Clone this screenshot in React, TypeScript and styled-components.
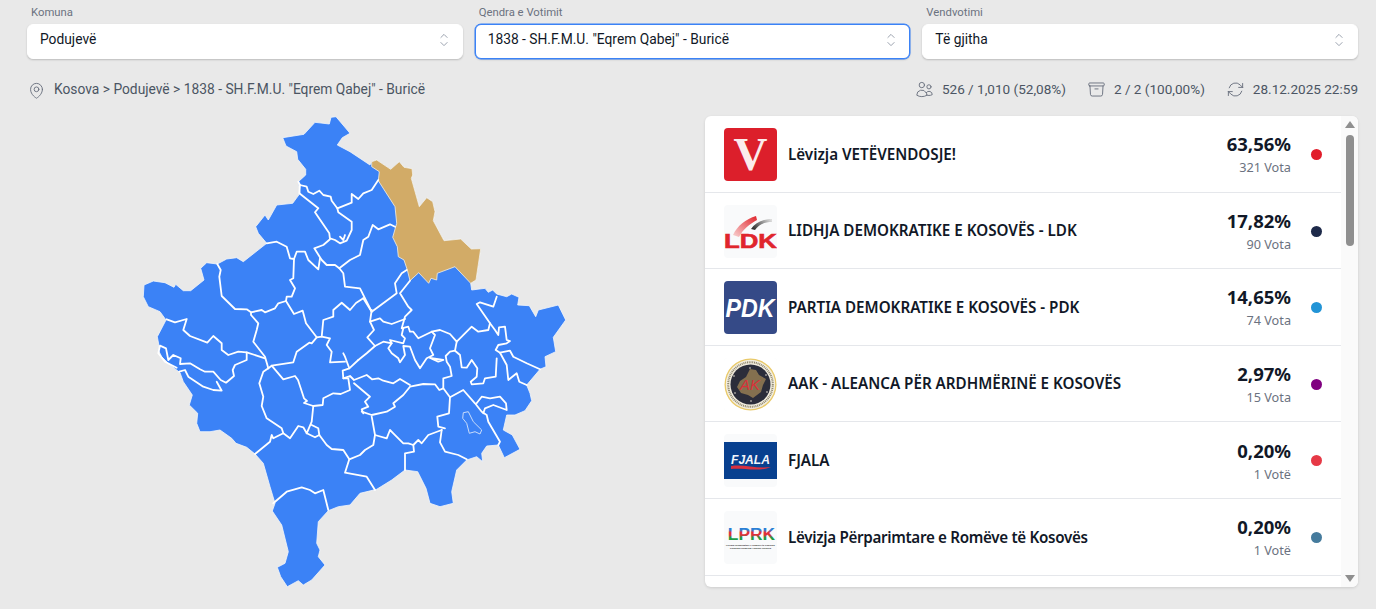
import React from "react";
import styled, { createGlobalStyle } from "styled-components";
import { HiOutlineChevronUpDown, HiOutlineMapPin, HiOutlineUsers, HiOutlineArchiveBox, HiOutlineArrowPath } from "react-icons/hi2";

const Global = createGlobalStyle`
  html, body { margin: 0; padding: 0; height: 100%; overflow: hidden; background: #e9e9e9; }
  * { box-sizing: border-box; }
`;
const Page = styled.div`
  width: 1376px; height: 609px; padding: 6px 18px 0 27px; overflow: hidden;
  font-family: Roboto, "Liberation Sans", sans-serif; background: #e9e9e9;
`;
const Filters = styled.div`display: grid; grid-template-columns: repeat(3, 1fr); gap: 12px;`;
const Field = styled.div`display: flex; flex-direction: column;`;
const Label = styled.label`font-size: 11.3px; line-height: 14px; color: #6b7280; padding-left: 4px; margin-bottom: 4px;`;
const Select = styled.div<{ $focus?: boolean }>`
  height: 35px; display: flex; align-items: center; justify-content: space-between;
  padding: 0 8px 3px 12px; background: #fff; border-radius: 6px; font-size: 13.8px; color: #111827;
  border: 1px solid ${(p) => (p.$focus ? "#3b82f6" : "#fff")};
  box-shadow: ${(p) => (p.$focus ? "0 0 0 .5px #3b82f6, 0 1px 2px rgba(0,0,0,.15)" : "0 1px 2px rgba(0,0,0,.2)")};
  svg { color: #9ca3af; flex: none; stroke-width: 1.2; }
`;
const SelectText = styled.span`margin-bottom: 2px;`;
const Info = styled.div`
  display: flex; justify-content: space-between; align-items: center; height: 20px; margin-top: 20px;
  font-size: 13.8px; color: #4b5563;
`;
const Crumb = styled.div`display: flex; align-items: center; gap: 8px; svg { color: #6b7280; stroke-width: 1.2; margin-top: 3px; }`;
const Stats = styled.div`display: flex; gap: 21px; font-size: 13.55px;`;
const Stat = styled.div`display: flex; align-items: center; gap: 8px; svg { color: #6b7280; stroke-width: 1.2; margin-top: 1px; }`;
const Main = styled.div`display: flex; margin-top: 17px;`;
const MapBox = styled.svg`display: block; width: 678px; height: 471px; flex: none;`;
const Panel = styled.div`
  width: 653px; height: 471px; display: flex; background: #fff; border-radius: 6px; overflow: hidden;
  box-shadow: 0 1px 3px rgba(0,0,0,.12);
`;
const List = styled.div`flex: 1; overflow: hidden;`;
const Row = styled.div`
  height: 76.6px; display: flex; align-items: center; padding: 1.5px 19px 0; gap: 11px;
  border-bottom: 1px solid #e5e7eb;
`;
const Logo = styled.div`
  width: 53px; height: 53px; flex: none; border-radius: 4px; overflow: hidden; background: #f9fafb;
  svg { display: block; width: 53px; height: 53px; }
`;
const Name = styled.div<{ $tight?: boolean }>`
  flex: 1; font-family: "Noto Sans", "Open Sans", sans-serif; font-weight: 600; font-size: 15.2px; color: #111827;
  letter-spacing: ${(p) => (p.$tight ? "-0.32px" : "0")}; margin-bottom: 2px;
`;
const Result = styled.div`text-align: right; font-family: "Noto Sans", "Open Sans", sans-serif; padding-top: 1.5px;`;
const Pct = styled.div`font-size: 18.5px; line-height: 24px; font-weight: 700; color: #111827;`;
const Votes = styled.div`font-size: 12.7px; line-height: 22px; color: #6b7280;`;
const Dot = styled.span<{ $c: string }>`
  width: 11px; height: 11px; border-radius: 50%; background: ${(p) => p.$c}; margin-left: 9px; flex: none;
`;
const Track = styled.div`
  width: 17px; flex: none; background: #fafafa; display: flex; flex-direction: column; align-items: center; position: relative;
`;
const ArrowUp = styled.span`
  margin-top: 5px; width: 0; height: 0; border-left: 5px solid transparent; border-right: 5px solid transparent;
  border-bottom: 7px solid #8f8f8f;
`;
const Thumb = styled.div`width: 8px; height: 111px; margin-top: 7px; border-radius: 4px; background: #8f8f8f;`;
const ArrowDown = styled.span`
  margin-top: auto; margin-bottom: 5px; width: 0; height: 0; border-left: 5px solid transparent;
  border-right: 5px solid transparent; border-top: 7px solid #8f8f8f;
`;

const outer = "282.7,137.7 304,134.3 315,122.3 329.3,124 331,117.3 336,116.7 350,133.3 342.3,137.7 337.3,145 350,151.7 370,165 371.7,161.7 376.7,160 390.7,169.3 399.3,161.7 404,167.3 412,168.7 412.7,175 411.3,178.3 419.3,206.7 426.7,197.7 432.7,201.7 435,211.7 433.3,220.7 444,240.7 460.7,239 471.3,249 480.7,248.7 476,280 470.7,283.3 471.7,290 485,288.3 488.3,292.3 492.7,290 496.7,294 506.7,296.7 511.7,294 519,297.3 517.7,305 529.3,305.7 535.7,316.7 538.3,310 558.3,305 565.7,320 553.3,337.3 555.7,351.7 545,356.7 546,366.7 540,369.3 526.7,385 530,393.3 531.7,400.7 525,410.7 515,415 506.7,415 503.3,430 512.3,435 520,449.3 504.3,457.7 498.3,445 486.7,446 481.7,453.3 482.7,461.7 476.7,456.7 466.7,460 456.7,470 451.7,491.7 453.3,503.3 440,506.7 430,503.3 426,488.3 417.7,471.7 405,470 391.7,480 376.7,489.3 360,493.3 350,505 338.3,506.7 328.3,510.7 318.3,521.7 316.7,543.3 320,550 318.3,556.7 325,565 311.7,580 303.3,585 298.3,580.7 287.3,586.7 280.7,576.7 277.3,567.3 285,563.3 288.3,551.7 281.7,525 272.3,511 275,503.3 270,486.7 263.3,463.3 255,454 246.7,447.3 236,443.3 231.7,438.3 220,430 210,431.7 200,431.7 196.7,423.3 197.7,413.3 189.3,405 192.3,395 183.3,381.7 180,372.7 168.3,363.3 161.7,356.7 158.3,350 159.3,347.3 157.3,336.7 166,320 160,311.7 148.3,306.7 143.3,296.7 144,285 153.3,281 165,282.7 174,287.3 175.7,284.3 183.3,290.7 190.7,290.7 204,280 200.7,268.3 206.7,262.7 217.3,264 226.7,259 236.7,257.7 243.3,261.7 266.7,243.3 258.3,233.3 255.7,226.7 265,215 268.3,220 276.7,205 292.7,203.3 300,193.3 298.3,181.7 305.7,175 305.7,169.3 297.7,159.3 296.7,151.7 286,146";
const gold = "371.7,161.7 376.7,160 390.7,169.3 399.3,161.7 404,167.3 412,168.7 412.7,175 411.3,178.3 419.3,206.7 426.7,197.7 432.7,201.7 435,211.7 433.3,220.7 444,240.7 460.7,239 471.3,249 480.7,248.7 476,280 470.7,283.3 455,266.7 437.3,273.3 436.7,280 431,278.3 428.7,283.3 418.7,272.7 410,280.7 407.3,270 404,260 398.3,256.7 397.3,246.7 392.7,237.3 396.7,223.3 395,206.7 378.3,180.7 379.3,171.7 371.7,166.7";
const lines = [
  "298.3,181.7 300,185 306.7,186.7 308.3,191.7 313.3,194 319.3,190.7 323.3,195 330.7,196.7 331.7,200.7 337.3,208.3 351.7,202.7 351.7,194 358.3,199 363.3,193.3 371.7,190 378.3,180",
  "300,185 299.3,193.3 318.3,208.3 315,212.3 329.3,233.3 330,239.3 323.3,245 314.3,248.3 321.7,260 326.7,265 335,265 339.3,268.3 350,260 360,255 363.3,240 368.3,236.7 372.7,225 378.3,229.3 390,224.3 395,226.7",
  "337.3,208.3 338.3,212.3 351.7,221.7 351.7,230 346.7,240.7 340,243.3 335,240 330,238.3",
  "340,236.7 343.3,240 345,235",
  "266.7,243.3 276.7,241.7 286.7,246.7 290,258.3 294,259 293.3,278.3 290,280 295,288.3 291.7,296.7 286.7,296.7 286,301 278.3,303.3 275,308.3 265,312.3 261.7,310 251,312.3 246.7,309.3 235,309 221.7,296 219.3,276.7 220.7,270 217.3,264",
  "294,259 296.7,251.7 305,251.7 308.3,260 318.3,269.3 320,258.3",
  "286,301 294,314 302.7,310.7 306,323.3 316.7,337.3 321.7,336.7 323.3,320 333.3,316.7 333.3,310 341.7,302.7 350,310 356,303 363.3,298.3",
  "251,312.3 251,315 258.3,323.3 256.7,330 253.3,341.7 265,356.7 268.3,368.3",
  "166.7,319.3 175,322.3 186.7,319 183.3,330 190,336 207.3,342.7 213.3,336 221.7,343.3 221.7,350 228.3,355 238.3,351.7 246.7,352.3 265,358.3",
  "246.7,352.3 246.7,360 235,365 232.7,370 234,376 226,382.7 220.7,380 213.3,371.7 205,371.7 200,369.3 190,363.3 180,364 180.7,358.3 173.3,355 168.3,360 166,348.3 160,345.7 158.3,353.3 165,361.7 176.7,367.7",
  "179.3,371.7 185,370 188.3,376.7 203.3,386.7 213.3,390 221.7,390.7 216.7,381.7",
  "268.3,368.3 263.3,371.7 259.3,383.3 263.3,396.7 261.7,406 266.7,418.3 281.7,428.3 283.3,433.3 273.3,438.3 271.7,435 270,441.7 255,454",
  "271.7,365.7 283.3,379.3 295,376 298,380 304,398.3 307,401 304,403 313.3,406 322.7,405 323.3,398.3 333.3,393.3 340.7,394 350,390 348.3,378.3 343.3,378.3 342.7,370.7 349.3,368.3 345,356.7 343.3,353.3",
  "321.7,336.7 330,338.3 326.7,345 331.7,351.7 330,362.3 345,361.7",
  "316.7,337.3 311.7,343.3 309.3,342.7 296.7,351.7 293.3,362.3 271.7,365.7 268.3,368.3",
  "349.3,368.3 358.3,360",
  "343.3,378.3 350,376 354,380 366.7,375 372,379.3 378.3,378.3 383.3,380.7 393.3,383.3 400,379 410,385",
  "354,383.3 370,396.7 365,401.7 368.3,406.7 361.7,409.3 363.3,413.3",
  "406.7,270 401.7,273.3 395,283.3 396.7,293.3 371.7,311.7 360,288.3 345,286.7 343.3,273.3 339.3,268.3",
  "363.3,298.3 371.7,311.7",
  "283.3,433.3 290,438.3 298.3,426 303.3,427.3 306.7,433.3 311.7,421.7 313.3,406",
  "306.7,433.3 315,437.3 319.3,435 318.3,428.3 311.7,425",
  "319.3,435 326.7,445 331.7,449 343.3,450 349.3,459.3 360,455 365,450 373.3,445 375,435 371.7,416.7",
  "349.3,459.3 345,472.7 366.7,476.7 375,490",
  "273.3,503.3 286.7,491.7 301.7,487.3 310,490 315,493.3 323.3,490 328.3,510",
  "410,280.7 400,293.3 408.3,306.7 411.7,310 405,316.7 401.7,328.3 408.3,326.7 410,331.7 413.3,331.7 418.3,338.3 431.7,331.7 440,330 450,334 456.7,341.7 471.7,326.7 478.3,331.7 488.3,330 490,323.3 476.7,304 480,302.3 493.3,306.7 496.7,296.7",
  "371.7,310 370,321.7 380,318.3 383.3,321.7 391.7,324 405,319",
  "370,321.7 374,330 367.3,337.3 375,346 366.7,353.3 358.3,360",
  "375,346 383.3,341.7 391.7,343.3 390,340 403.3,343.3 405,338.3 401.7,335 403.3,328.3",
  "490,323.3 495,330 498.3,335 499,327.3 505,326.7 506.7,340 510,341 506.7,343.3 498.3,345 495.7,350 500,352.7 510,350.7 513.3,356.7 526.7,363.3 540,369.3",
  "500,352.7 506.7,365 508.3,380 516.7,373.3 519.3,381.7 526.7,385",
  "496.7,358.3 495.7,376.7 485,378.3 483.3,383.3 471.7,384.3 470.7,381.7 476.7,376.7 477.3,368.3 471.7,360 466.7,367.7 461.7,367.3 460,355 455,350.7 456.7,341.7",
  "455,350.7 450,351.7 445.7,356 446.7,361.7 450,366.7 451.7,376 443.3,378.3 443.3,388.3 450,397.3 463.3,390 475,403.3 481.7,411.7 486.7,415 488.3,421.7 500,441.7 498.3,445",
  "450,397.3 449,413.3 437.3,416.7 438.3,426.7 445,428.3",
  "441.7,430 440,442.3 445,451.7 458.3,455 466.7,459.3",
  "441.7,430 428.3,435 421.7,443.3 418.3,440 413.3,445 408.3,443.3 403.3,443.3 393.3,433.3 390,430 386.7,438.3 375,435",
  "413.3,445 414,451.7 405,453.3 405,470",
  "361.7,411.7 371.7,415 386.7,411.7 395,406.7 393.3,403.3 403.3,395 410,386.7 423.3,384 435,384.3 439.3,390 443.3,388.3",
  "431.7,331.7 435,335 430,348.3 433.3,355 426.7,358.3 420,368.3 415,360 410,346.7 403.3,346 405,355 400,362.3 398.3,358.3 391.7,353.3 388.3,348.3 391.7,343.3",
  "430,358 443.3,360 438.3,361.7 430,358",
  "476,404 481.7,396.7 490,398.3 500,396.7 506,403.3 506.7,410 493.3,405 485,408.3 483.3,413.3",
];
const lake = "463.3,412.7 468.3,411.7 473.3,421.7 481.7,430 480,434 475,431.7 469.3,433.3 466.7,423.3 462.7,418.3";

const KosovoMap = () => (
  <MapBox viewBox="27 116 678 471">
    <polygon points={outer} fill="#3b82f6" stroke="#f4f6fa" strokeWidth="0.8" strokeLinejoin="round" />
    <polygon points={gold} fill="#d2ab67" stroke="#f4f0e6" strokeWidth="0.8" strokeLinejoin="round" />
    {lines.map((l, i) => (
      <polyline key={i} points={l} fill="none" stroke="#fff" strokeWidth="1.8" strokeLinejoin="round" strokeLinecap="round" />
    ))}
    <polygon points={lake} fill="#3b82f6" stroke="#c9dcfa" strokeWidth="1" />
  </MapBox>
);

const VLogo = () => (
  <svg viewBox="0 0 53 53">
    <rect width="53" height="53" fill="#dc1f2b" />
    <text x="26.5" y="42" textAnchor="middle" fontFamily="Liberation Serif, serif" fontWeight="700" fontSize="47" fill="#fbecec">V</text>
  </svg>
);
const LdkLogo = () => (
  <svg viewBox="0 0 53 53">
    <defs>
      <linearGradient id="ldkr" x1="0" x2="1" y1="1" y2="0"><stop offset="0" stopColor="#f9d3d3" /><stop offset="1" stopColor="#e0252c" /></linearGradient>
      <linearGradient id="ldkg" x1="0" x2="1" y1="0.6" y2="0.2"><stop offset="0" stopColor="#333" /><stop offset="1" stopColor="#ddd" /></linearGradient>
    </defs>
    <path d="M9 30 C13 21 22 14 32 11 L33 15 C26 19 19 24 15 32 Z" fill="url(#ldkr)" />
    <path d="M27 24 C31 18 38 14 48 14 L48 17 C41 17 35 19 31 25 Z" fill="url(#ldkg)" />
    <text x="26.5" y="43" textAnchor="middle" fontFamily="Liberation Sans, sans-serif" fontWeight="700" fontSize="21" fill="#e0252c" stroke="#e0252c" strokeWidth="0.6" textLength="53" lengthAdjust="spacingAndGlyphs">LDK</text>
  </svg>
);
const PdkLogo = () => (
  <svg viewBox="0 0 53 53">
    <rect width="53" height="53" fill="#354a87" />
    <text x="26" y="36" textAnchor="middle" fontFamily="Liberation Sans, sans-serif" fontWeight="700" fontStyle="italic" fontSize="25" fill="#fff" textLength="49" lengthAdjust="spacingAndGlyphs">PDK</text>
  </svg>
);
const AakLogo = () => (
  <svg viewBox="0 0 53 53">
    <rect width="53" height="53" fill="#fff" />
    <circle cx="26.5" cy="26.5" r="26" fill="#e9c968" />
    <circle cx="26.5" cy="26.5" r="24.7" fill="#f3eedf" />
    <circle cx="26.5" cy="26.5" r="22.3" fill="none" stroke="#8f8870" strokeWidth="2" strokeDasharray="1 0.8" />
    <circle cx="26.5" cy="26.5" r="20" fill="#2b2d3a" />
    <polygon points="26,11 32,12 35,17 42,21 39,27 37,34 29,40 24,37 17,35 13,29 16,23 22,19" fill="#84704f" />
    {[[26, 10], [42, 17], [43, 34], [27, 43], [11, 35], [10, 18]].map(([x, y]) => (
      <circle key={x + "-" + y} cx={x} cy={y} r="0.8" fill="#e8e4d8" />
    ))}
    <text x="26" y="32" textAnchor="middle" fontFamily="Liberation Sans, sans-serif" fontStyle="italic" fontSize="15" fill="#d9303a">AK</text>
  </svg>
);
const FjalaLogo = () => (
  <svg viewBox="0 0 53 53">
    <rect y="8" width="53" height="37" fill="#08408f" />
    <text x="26.5" y="30" textAnchor="middle" fontFamily="Liberation Sans, sans-serif" fontWeight="700" fontStyle="italic" fontSize="12.5" fill="#f2f5fb" textLength="39" lengthAdjust="spacingAndGlyphs">FJALA</text>
    <path d="M7 32 C20 30 32 35 47 33 C35 38 20 34 7 35 Z" fill="#d8303f" />
  </svg>
);
const LprkLogo = () => (
  <svg viewBox="0 0 53 53">
    <defs>
      <linearGradient id="lprk" x1="0" x2="0" y1="0" y2="1">
        <stop offset="0.3" stopColor="#2b7fd4" /><stop offset="0.42" stopColor="#e0303a" /><stop offset="0.55" stopColor="#e0303a" /><stop offset="0.68" stopColor="#1f9a45" />
      </linearGradient>
    </defs>
    <text x="27.5" y="29" textAnchor="middle" fontFamily="Liberation Sans, sans-serif" fontWeight="700" fontSize="17.4" fill="url(#lprk)">LPRK</text>
    <text x="26.5" y="34.5" textAnchor="middle" fontFamily="Liberation Sans, sans-serif" fontSize="2.4" fontWeight="700" fill="#333">Lëvizja Përparimtare e Romëve të Kosovës</text>
    <text x="26.5" y="37.6" textAnchor="middle" fontFamily="Liberation Sans, sans-serif" fontSize="2.4" fontWeight="700" fill="#333">Kosovaki Romengi Angluni Phiravia</text>
  </svg>
);

const rows = [
  { logo: <VLogo />, name: "Lëvizja VETËVENDOSJE!", pct: "63,56%", votes: "321 Vota", c: "#e11d2a" },
  { logo: <LdkLogo />, name: "LIDHJA DEMOKRATIKE E KOSOVËS - LDK", pct: "17,82%", votes: "90 Vota", c: "#1e2a4a" },
  { logo: <PdkLogo />, name: "PARTIA DEMOKRATIKE E KOSOVËS - PDK", pct: "14,65%", votes: "74 Vota", c: "#2294d6" },
  { logo: <AakLogo />, name: "AAK - ALEANCA PËR ARDHMËRINË E KOSOVËS", pct: "2,97%", votes: "15 Vota", c: "#800080" },
  { logo: <FjalaLogo />, name: "FJALA", pct: "0,20%", votes: "1 Votë", c: "#e63946" },
  { logo: <LprkLogo />, name: "Lëvizja Përparimtare e Romëve të Kosovës", pct: "0,20%", votes: "1 Votë", c: "#457b9d", tight: true },
];

export default function App() {
  return (
    <Page>
      <Global />
      <Filters>
        <Field><Label>Komuna</Label><Select><SelectText>Podujevë</SelectText><HiOutlineChevronUpDown size={20} /></Select></Field>
        <Field><Label>Qendra e Votimit</Label><Select $focus><SelectText>1838 - SH.F.M.U. "Eqrem Qabej" - Buricë</SelectText><HiOutlineChevronUpDown size={20} /></Select></Field>
        <Field><Label>Vendvotimi</Label><Select><SelectText>Të gjitha</SelectText><HiOutlineChevronUpDown size={20} /></Select></Field>
      </Filters>
      <Info>
        <Crumb><HiOutlineMapPin size={19} />Kosova &gt; Podujevë &gt; 1838 - SH.F.M.U. "Eqrem Qabej" - Buricë</Crumb>
        <Stats>
          <Stat><HiOutlineUsers size={19} />526 / 1,010 (52,08%)</Stat>
          <Stat><HiOutlineArchiveBox size={19} />2 / 2 (100,00%)</Stat>
          <Stat><HiOutlineArrowPath size={19} />28.12.2025 22:59</Stat>
        </Stats>
      </Info>
      <Main>
        <KosovoMap />
        <Panel>
          <List>
            {rows.map((r) => (
              <Row key={r.name}>
                <Logo>{r.logo}</Logo>
                <Name $tight={r.tight}>{r.name}</Name>
                <Result><Pct>{r.pct}</Pct><Votes>{r.votes}</Votes></Result>
                <Dot $c={r.c} />
              </Row>
            ))}
          </List>
          <Track><ArrowUp /><Thumb /><ArrowDown /></Track>
        </Panel>
      </Main>
    </Page>
  );
}
